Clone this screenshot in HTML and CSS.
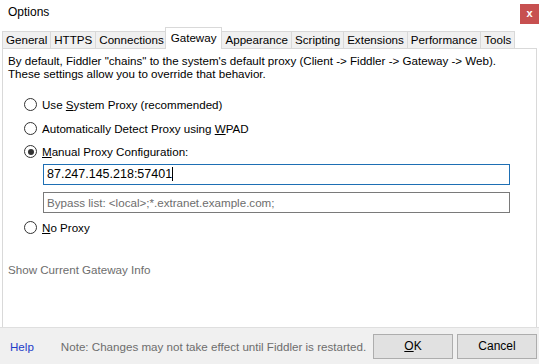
FILE: index.html
```html
<!DOCTYPE html>
<html lang="en">
<head>
    <meta charset="UTF-8">
    <title>Options</title>
    <link rel="stylesheet" href="styles.css">
</head>
<body>
    <div class="window">
        <div class="titlebar">
            <span class="title">Options</span>
            <span class="close">x</span>
        </div>

        <div class="tabs">
            <div class="tab">General</div>
            <div class="tab">HTTPS</div>
            <div class="tab">Connections</div>
            <div class="tab active">Gateway</div>
            <div class="tab">Appearance</div>
            <div class="tab">Scripting</div>
            <div class="tab">Extensions</div>
            <div class="tab">Performance</div>
            <div class="tab">Tools</div>
        </div>

        <div class="panel">
            <p class="intro">By default, Fiddler "chains" to the system's default proxy (Client -&gt; Fiddler -&gt; Gateway -&gt; Web).<br>These settings allow you to override that behavior.</p>

            <div class="options">
                <label class="radio"><span class="dot"></span><span>Use <u>S</u>ystem Proxy (recommended)</span></label>
                <label class="radio"><span class="dot"></span><span>Automatically Detect Proxy using <u>W</u>PAD</span></label>
                <label class="radio"><span class="dot checked"></span><span><u>M</u>anual Proxy Configuration:</span></label>
                <div class="field focused"><span>87.247.145.218:57401</span><span class="caret"></span></div>
                <div class="field placeholder"><span>Bypass list: &lt;local&gt;;*.extranet.example.com;</span></div>
                <label class="radio"><span class="dot"></span><span><u>N</u>o Proxy</span></label>
            </div>

            <div class="info">Show Current Gateway Info</div>
        </div>

        <div class="footer">
            <a class="help">Help</a>
            <span class="note">Note: Changes may not take effect until Fiddler is restarted.</span>
            <button class="btn"><u>O</u>K</button>
            <button class="btn">Cancel</button>
        </div>
    </div>
</body>
</html>
```

FILE: styles.css
```css
body {
    margin: 0;
    background: #ffffff;
    font-family: "Liberation Sans", Arial, sans-serif;
    font-size: 11.6px;
    color: #000000;
}
.window {
    width: 539px;
    height: 364px;
    display: flex;
    flex-direction: column;
    overflow: hidden;
}
.titlebar {
    height: 28px;
    display: flex;
    justify-content: space-between;
    align-items: flex-start;
}
.title {
    margin: 5px 0 0 8px;
    font-size: 12px;
}
.close {
    width: 19px;
    height: 20px;
    margin-top: 4px;
    background: #c75050;
    color: #ffffff;
    font-weight: bold;
    font-size: 11px;
    text-align: center;
    line-height: 18px;
}
.tabs {
    height: 20px;
    display: flex;
    align-items: flex-end;
    padding-left: 2px;
}
.tab {
    height: 16px;
    line-height: 16px;
    padding: 0 3px;
    background: #f0f0f0;
    border: 1px solid #d9d9d9;
    border-bottom: none;
    margin-right: -1px;
}
.tab.active {
    height: 21px;
    line-height: 19px;
    background: #ffffff;
    margin: 0 -1px -1px -2px;
    padding: 0 5px;
    position: relative;
    z-index: 1;
}
.panel {
    flex: 1;
    margin: 0 2px;
    border: 1px solid #d9d9d9;
    border-bottom: none;
    padding: 5px 5px 0;
}
.intro {
    margin: 0;
    line-height: 13px;
}
.options {
    margin-top: 13px;
    padding-left: 16px;
}
.radio {
    display: flex;
    align-items: center;
    height: 23.5px;
}
.dot {
    width: 11px;
    height: 11px;
    border: 1px solid #333333;
    border-radius: 50%;
    margin-right: 5px;
    display: flex;
    align-items: center;
    justify-content: center;
}
.dot.checked::after {
    content: "";
    width: 6px;
    height: 6px;
    border-radius: 50%;
    background: #333333;
}
.field {
    margin: 0 0 0 19px;
    width: 462px;
    height: 19px;
    border: 1px solid #7a7a7a;
    padding-left: 3px;
    display: flex;
    align-items: center;
}
.field.focused {
    border-color: #1e6fb4;
    font-size: 12.5px;
    margin-bottom: 7px;
}
.field.placeholder {
    color: #6d6d6d;
    margin-bottom: 3px;
}
.caret {
    width: 1px;
    height: 14px;
    background: #000000;
}
.info {
    margin-top: 24px;
    color: #6d6d6d;
}
.footer {
    height: 36px;
    border-top: 1px solid #dfdfdf;
    background: #f0f0f0;
    display: flex;
    align-items: center;
    padding: 0 2px 0 10px;
}
.help {
    color: #1e3cc8;
}
.note {
    color: #6d6d6d;
    margin-left: 27px;
    flex: 1;
    white-space: nowrap;
}
.btn {
    width: 80px;
    height: 25px;
    margin-left: 4px;
    background: #e1e1e1;
    border: 1px solid #adadad;
    font-family: "Liberation Sans", Arial, sans-serif;
    font-size: 12px;
    color: #000000;
}
```
